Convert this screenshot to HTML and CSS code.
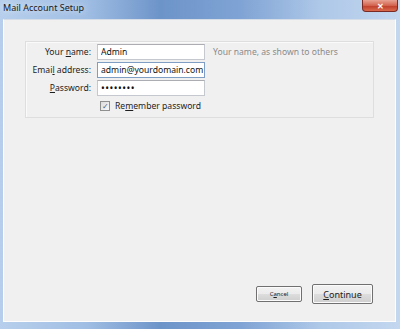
FILE: index.html
```html
<!DOCTYPE html>
<html lang="en">
<head>
    <meta charset="UTF-8">
    <title>Mail Account Setup</title>
    <link rel="stylesheet" href="styles.css">
</head>
<body>
    <div class="window">
        <div class="titlebar">
            <span class="title">Mail Account Setup</span>
            <span class="close-btn">&#x2715;</span>
        </div>
        <div class="frame">
            <div class="content">
                <div class="group">
                    <label class="field-label" for="name">Your <u>n</u>ame:</label>
                    <input class="field" type="text" id="name" value="Admin">
                    <span class="hint">Your name, as shown to others</span>

                    <label class="field-label" for="email">Emai<u>l</u> address:</label>
                    <input class="field focused" type="text" id="email" value="admin@yourdomain.com">
                    <span></span>

                    <label class="field-label" for="pass"><u>P</u>assword:</label>
                    <input class="field pass" type="password" id="pass" value="password">
                    <span></span>

                    <span></span>
                    <label class="remember"><span class="check">&#x2713;</span><span>Re<u>m</u>ember password</span></label>
                </div>

                <div class="buttons">
                    <button class="btn btn-small">C<u>a</u>ncel</button>
                    <button class="btn btn-main"><u>C</u>ontinue</button>
                </div>
            </div>
        </div>
    </div>
</body>
</html>
```

FILE: styles.css
```css
* {
    margin: 0;
    padding: 0;
    box-sizing: border-box;
}

body {
    width: 400px;
    height: 329px;
    overflow: hidden;
    font-family: "Noto Sans", "Open Sans", sans-serif;
    font-size: 8.6px;
    color: #1e1e1e;
}

.window {
    width: 400px;
    height: 329px;
    display: flex;
    flex-direction: column;
    background: linear-gradient(90deg, #b7cfec 0%, #9fbde3 22%, #6d94c9 40%, #7fa3d4 60%, #aec8e8 80%, #c3d7ef 100%);
}

.titlebar {
    height: 19px;
    flex-shrink: 0;
    display: flex;
    justify-content: space-between;
    align-items: flex-start;
}

.title {
    padding: 1px 0 0 3px;
    font-size: 9px;
    color: #1a1a1a;
    text-shadow: 0 0 6px rgba(255, 255, 255, 0.9);
}

.close-btn {
    width: 36px;
    height: 12px;
    margin-right: 2px;
    border: 1px solid #7a2a22;
    border-top: none;
    border-radius: 0 0 4px 4px;
    background: linear-gradient(180deg, #e8a293 0%, #d2634f 50%, #c0402c 55%, #d96a4e 100%);
    color: #fff;
    font-size: 8px;
    font-weight: bold;
    line-height: 11px;
    text-align: center;
}

.frame {
    flex: 1;
    display: flex;
    padding: 0 4px 7px 3px;
}

.content {
    flex: 1;
    display: flex;
    flex-direction: column;
    background: #f0f0f0;
    border: 1px solid #fdfdfd;
    border-top-color: #d6dde6;
}

.group {
    margin: 21px 21px 0 21px;
    padding: 2px 0 5px 0;
    border: 1px solid #dedede;
    box-shadow: inset 1px 1px 0 #fafafa;
    display: grid;
    grid-template-columns: 65px 108px auto;
    column-gap: 6px;
    row-gap: 2px;
    align-items: center;
}

.field-label {
    text-align: right;
    white-space: nowrap;
}

.field {
    height: 16px;
    padding: 0 1px 0 3px;
    border: 1px solid #c5c9cf;
    border-top-color: #abadb3;
    background: #fff;
    font-family: inherit;
    font-size: 8.6px;
    color: #111;
    outline: none;
}

.focused {
    border-color: #7e9fc3;
}

.pass {
    letter-spacing: 0.5px;
    font-size: 10px;
}

.hint {
    padding-left: 2px;
    color: #8a8a8a;
    white-space: nowrap;
}

.remember {
    display: flex;
    align-items: center;
    gap: 5px;
    margin-top: 2px;
    padding-left: 3px;
    white-space: nowrap;
}

.check {
    width: 10px;
    height: 10px;
    border: 1px solid #8f8f8f;
    background: linear-gradient(135deg, #dcdcdc, #f8f8f8);
    color: #4a5f87;
    font-size: 8px;
    line-height: 8px;
    text-align: center;
}

.buttons {
    margin-top: auto;
    margin-bottom: 17px;
    margin-right: 22px;
    display: flex;
    justify-content: flex-end;
    align-items: center;
    gap: 10px;
}

.btn {
    font-family: inherit;
    color: #1e1e1e;
    border: 1px solid #707070;
    border-radius: 2px;
    background: linear-gradient(180deg, #f2f2f2 0%, #ebebeb 50%, #dddddd 51%, #cfcfcf 100%);
    box-shadow: inset 0 0 0 1px #fbfbfb;
}

.btn-small {
    width: 46px;
    height: 16px;
    font-size: 6px;
}

.btn-main {
    width: 61px;
    height: 20px;
    font-size: 9px;
}
```
